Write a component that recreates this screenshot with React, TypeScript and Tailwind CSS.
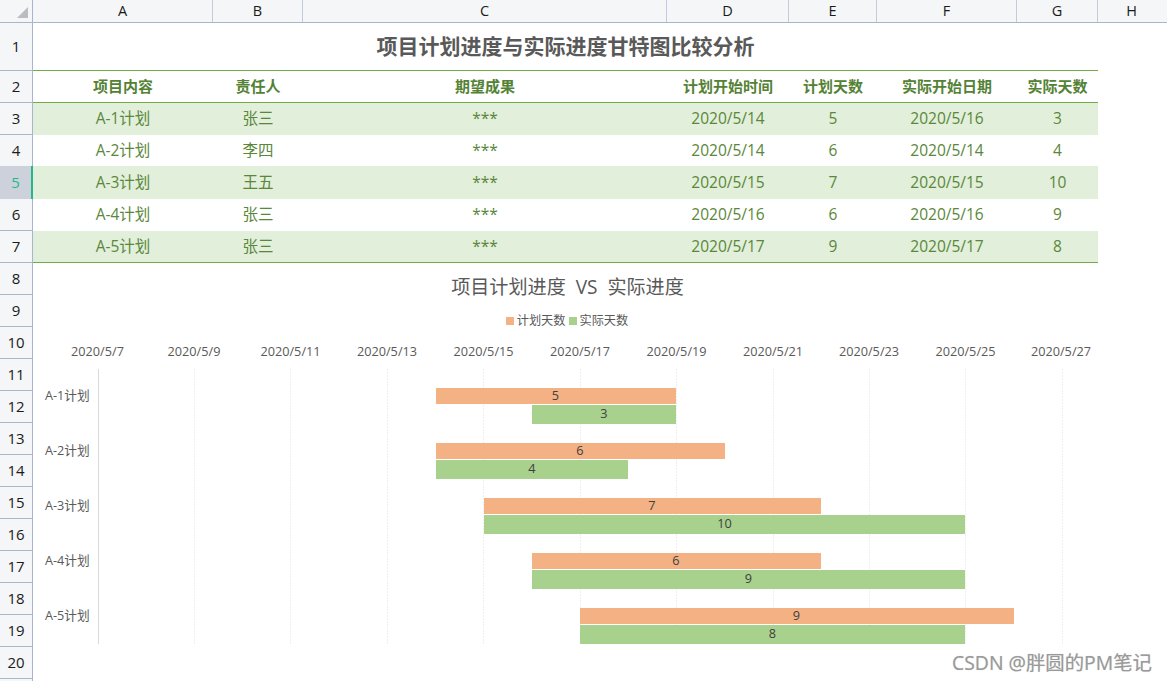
const columns = [
  { label: "A", w: "w-[180px]" },
  { label: "B", w: "w-[90px]" },
  { label: "C", w: "w-[364px]" },
  { label: "D", w: "w-[122px]" },
  { label: "E", w: "w-[88px]" },
  { label: "F", w: "w-[140px]" },
  { label: "G", w: "w-[81px]" },
];

const headers = ["项目内容", "责任人", "期望成果", "计划开始时间", "计划天数", "实际开始日期", "实际天数"];

const rows = [
  ["A-1计划", "张三", "***", "2020/5/14", "5", "2020/5/16", "3"],
  ["A-2计划", "李四", "***", "2020/5/14", "6", "2020/5/14", "4"],
  ["A-3计划", "王五", "***", "2020/5/15", "7", "2020/5/15", "10"],
  ["A-4计划", "张三", "***", "2020/5/16", "6", "2020/5/16", "9"],
  ["A-5计划", "张三", "***", "2020/5/17", "9", "2020/5/17", "8"],
];

const ticks = [
  ["2020/5/7", 97.5],
  ["2020/5/9", 194],
  ["2020/5/11", 290.5],
  ["2020/5/13", 387],
  ["2020/5/15", 483.5],
  ["2020/5/17", 580],
  ["2020/5/19", 676.5],
  ["2020/5/21", 773],
  ["2020/5/23", 869],
  ["2020/5/25", 965.5],
  ["2020/5/27", 1061],
] as const;

const gridLines = [194.5, 290.5, 387.5, 483.5, 580.5, 676.5, 773.5, 869.5, 965.5, 1062.5];

const bars = [
  { name: "A-1计划", y: 388, plan: [436, 676, 5], actual: [532, 676, 3] },
  { name: "A-2计划", y: 443, plan: [436, 725, 6], actual: [436, 628, 4] },
  { name: "A-3计划", y: 498, plan: [484, 821, 7], actual: [484, 965, 10] },
  { name: "A-4计划", y: 553, plan: [532, 821, 6], actual: [532, 965, 9] },
  { name: "A-5计划", y: 608, plan: [580, 1014, 9], actual: [580, 965, 8] },
];

function RowHead({ n, className = "h-8" }: { n: number; className?: string }) {
  return (
    <div className={`${className} w-[33px] shrink-0 flex items-center justify-center bg-[#f5f6f8] border-r border-b border-[#a9b5cf] text-[15px] text-[#1a1a1a]`}>
      {n}
    </div>
  );
}

function Chart() {
  return (
    <div className="w-[1134px] flex flex-col">
      <div className="w-[1069px] h-[48px] flex items-center justify-center text-[19.1px] text-[#595959] whitespace-pre">
        项目计划进度  VS  实际进度
      </div>
      <div className="w-[1068px] h-[20px] flex items-center justify-center gap-[3px] text-[12.2px] text-[#595959]">
        <span className="w-2 h-2 bg-[#f4b183]" />
        <span>计划天数</span>
        <span className="w-2 h-2 bg-[#a9d18e]" />
        <span>实际天数</span>
      </div>
      <svg viewBox="33 341 1134 310" width="1134" height="310" className="mt-[10px] block">
        {ticks.map(([label, x]) => (
          <text key={label} x={x} y={356} textAnchor="middle" fontSize="12.7" fill="#595959">{label}</text>
        ))}
        {gridLines.map((x) => (
          <line key={x} x1={x} x2={x} y1={369} y2={644} stroke="#efefef" strokeDasharray="2 1" />
        ))}
        <line x1={98.5} x2={98.5} y1={369} y2={644} stroke="#d9d9d9" />
        {bars.map((b) => (
          <g key={b.name}>
            <text x={45} y={b.y + 12} fontSize="12.7" fill="#595959">{b.name}</text>
            <rect x={b.plan[0]} y={b.y} width={b.plan[1] - b.plan[0]} height={16} fill="#f4b183" />
            <rect x={b.actual[0]} y={b.y + 17} width={b.actual[1] - b.actual[0]} height={19} fill="#a9d18e" />
            <text x={(b.plan[0] + b.plan[1]) / 2 - 0.5} y={b.y + 12} textAnchor="middle" fontSize="12.7" fill="#404040">{b.plan[2]}</text>
            <text x={(b.actual[0] + b.actual[1]) / 2} y={b.y + 30} textAnchor="middle" fontSize="12.7" fill="#404040">{b.actual[2]}</text>
          </g>
        ))}
      </svg>
    </div>
  );
}

export default function App() {
  return (
    <div className="relative w-[1167px] h-[681px] overflow-hidden bg-white font-['Open_Sans','Noto_Sans_CJK_SC',sans-serif]">
      {/* column letters */}
      <div className="flex h-[23px] bg-[#f5f6f8] border-b border-[#a9b5cf] text-[14.5px] text-[#1a1a1a]">
        <div className="w-[33px] shrink-0 border-r border-[#a9b5cf] flex items-start justify-start">
          <svg width="32" height="22" viewBox="0 0 32 22">
            <polygon points="28,7 28,18 17,18" fill="#b9bcc2" />
          </svg>
        </div>
        {columns.map((c) => (
          <div key={c.label} className={`${c.w} shrink-0 border-r border-[#c3cadb] flex items-center justify-center`}>
            {c.label}
          </div>
        ))}
        <div className="flex-1 flex items-center justify-center pr-[1px] -ml-[1px]">H</div>
      </div>

      {/* title */}
      <div className="flex">
        <RowHead n={1} className="h-12" />
        <div className="w-[1065px] h-12 border-b border-[#70ad47] flex items-center justify-center text-[21px] font-bold text-[#595959]">
          项目计划进度与实际进度甘特图比较分析
        </div>
      </div>

      {/* header row */}
      <div className="flex">
        <RowHead n={2} />
        <div className="flex h-8 border-b border-[#70ad47]">
          {headers.map((h, i) => (
            <div key={h} className={`${columns[i].w} shrink-0 flex items-center justify-center text-[15px] font-bold text-[#548235]`}>
              {h}
            </div>
          ))}
        </div>
      </div>

      {/* data rows */}
      {rows.map((r, ri) => {
        const selected = ri === 2;
        return (
          <div key={ri} className={selected ? "flex -mt-px relative" : "flex"}>
            {selected ? (
              <div className="h-[33px] w-[33px] shrink-0 flex items-center justify-center bg-[#ccd1db] border-r-2 border-[#1fb98a] text-[15px] text-[#1fb98a]">
                5
              </div>
            ) : (
              <RowHead n={ri + 3} />
            )}
            <div className={`flex ${selected ? "h-[33px]" : "h-8"} ${ri % 2 === 0 ? "bg-[#e2efda]" : "bg-white"} ${ri === 4 ? "border-b border-[#70ad47]" : ""}`}>
              {r.map((v, i) => (
                <div key={i} className={`${columns[i].w} shrink-0 flex items-center justify-center text-[15.5px] text-[#5a873b] ${selected ? "pt-px" : ""}`}>
                  {v}
                </div>
              ))}
            </div>
          </div>
        );
      })}

      {/* rows 8-20 with the chart sitting beside the row numbers */}
      <div className="flex">
        <div className="flex flex-col shrink-0">
          {Array.from({ length: 13 }, (_, i) => (
            <RowHead key={i} n={i + 8} />
          ))}
          <div className="h-1 w-[33px] bg-[#f5f6f8] border-r border-[#a9b5cf]" />
        </div>
        <Chart />
      </div>

      {/* watermark */}
      <div className="absolute right-[15px] bottom-[6px] text-[19.4px] leading-6 text-[#9a9a9a] [text-shadow:0_0_1px_#c8c8c8]">
        CSDN @胖圆的PM笔记
      </div>
    </div>
  );
}
